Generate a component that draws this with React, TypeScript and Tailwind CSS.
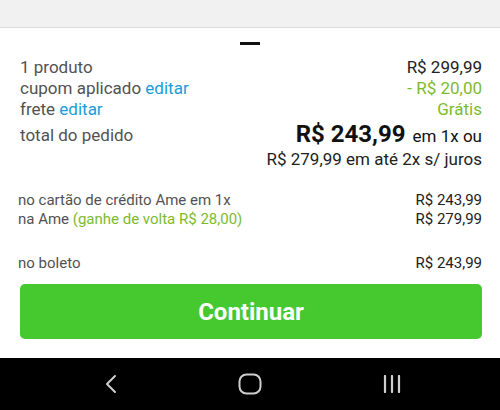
import React from 'react';

const Row: React.FC<{ left: React.ReactNode; right: React.ReactNode }> = ({ left, right }) => (
  <div className="flex items-center justify-between">
    <div>{left}</div>
    <div>{right}</div>
  </div>
);

const App: React.FC = () => {
  return (
    <div
      className="w-[500px] h-[410px] flex flex-col bg-white overflow-hidden"
      style={{ fontFamily: 'Roboto, "Liberation Sans", sans-serif' }}
    >
      <div className="h-[28px] shrink-0 bg-[#f1f1f1] border-b border-[#dcdcdc]" />

      <div className="flex-1 flex flex-col">
        <div className="flex justify-center pt-[14px]">
          <div className="w-[20px] h-[3px] bg-[#111]" />
        </div>

        <div className="px-[18px] mt-[12px] text-[17px] leading-[21px] text-[#525252]">
          <div className="pl-[2px]">
            <Row left="1 produto" right={<span className="text-[#222]">R$ 299,99</span>} />
            <Row
              left={
                <>
                  cupom aplicado <span className="text-[#1b9cd8]">editar</span>
                </>
              }
              right={<span className="text-[#7dbb2c]">- R$ 20,00</span>}
            />
            <Row
              left={
                <>
                  frete <span className="text-[#1b9cd8]">editar</span>
                </>
              }
              right={<span className="text-[#7dbb2c]">Grátis</span>}
            />
            <div className="flex justify-between items-center h-[28px]">
              <div className="pt-[2px]">total do pedido</div>
              <div className="text-[#111] flex items-baseline">
                <span className="text-[24px] font-bold leading-[27px]">R$ 243,99</span>
                <span className="ml-[7px]">em 1x ou</span>
              </div>
            </div>
            <div className="text-right text-[#222] mt-[1px]">R$ 279,99 em até 2x s/ juros</div>
          </div>

          <div className="mt-[21px] text-[15px] leading-[19px]">
            <Row left="no cartão de crédito Ame em 1x" right={<span className="text-[#222]">R$ 243,99</span>} />
            <Row
              left={
                <>
                  na Ame <span className="text-[#7dbb2c]">(ganhe de volta R$ 28,00)</span>
                </>
              }
              right={<span className="text-[#222]">R$ 279,99</span>}
            />
            <div className="mt-[25px]">
              <Row left="no boleto" right={<span className="text-[#222]">R$ 243,99</span>} />
            </div>
          </div>
        </div>

        <div className="px-[20px] pr-[18px] mt-[11px]">
          <button className="w-full h-[55px] rounded-[5px] bg-[#45c92f] text-white text-[24px] font-bold flex items-center justify-center">
            Continuar
          </button>
        </div>
      </div>

      <div className="h-[52px] shrink-0 bg-black flex items-center justify-between px-[104px] pr-[98px]">
        <svg width="14" height="20" viewBox="0 0 14 20" fill="none">
          <path d="M11 2 L3 10 L11 18" stroke="#cfcfcf" strokeWidth="2" strokeLinecap="round" strokeLinejoin="round" />
        </svg>
        <svg width="24" height="22" viewBox="0 0 24 22" fill="none">
          <rect x="1.5" y="1.5" width="21" height="19" rx="7" stroke="#cfcfcf" strokeWidth="2" />
        </svg>
        <svg width="20" height="18" viewBox="0 0 20 18" fill="none">
          <path d="M3 1 V17 M10 1 V17 M17 1 V17" stroke="#cfcfcf" strokeWidth="2.2" strokeLinecap="round" />
        </svg>
      </div>
    </div>
  );
};

export default App;
